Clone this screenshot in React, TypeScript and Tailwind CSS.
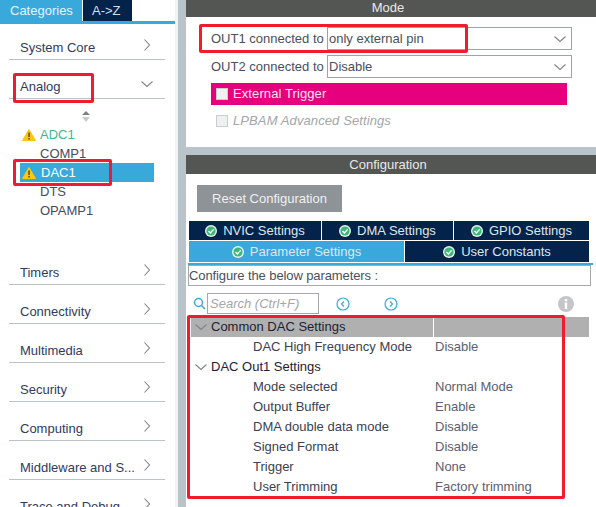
import React from 'react'

const font = 'font-["Liberation_Sans",Arial,sans-serif]'

function Chevron({ down = false }: { down?: boolean }) {
  return (
    <svg width="12" height="12" viewBox="0 0 12 12" fill="none" stroke="#7f8488" strokeWidth="1.1">
      {down ? <path d="M0.5 3.5 L6 8.5 L11.5 3.5" /> : <path d="M3.5 0.5 L8.5 6 L3.5 11.5" />}
    </svg>
  )
}

function Warn() {
  return (
    <svg width="14" height="12" viewBox="0 0 14 12">
      <path d="M7 0.5 L13.5 11.5 L0.5 11.5 Z" fill="#fbc80a" stroke="#fbc80a" strokeLinejoin="round" />
      <rect x="6.3" y="3.5" width="1.5" height="4.5" fill="#5a4a10" />
      <rect x="6.3" y="9" width="1.5" height="1.5" fill="#5a4a10" />
    </svg>
  )
}

function Check() {
  return (
    <svg width="12" height="12" viewBox="0 0 12 12" className="shrink-0">
      <circle cx="6" cy="6" r="6" fill="#e8f3ee" />
      <circle cx="6" cy="6" r="4.6" fill="#3cb878" />
      <path d="M3.5 6 L5.4 7.9 L8.6 4.4" fill="none" stroke="#fff" strokeWidth="1.4" />
    </svg>
  )
}

function Category({ label, h = 'h-[39px]', down = false }: { label: string; h?: string; down?: boolean }) {
  return (
    <div className={`${h} ml-[9px] w-[156px] border-b border-[#b9c4ca] flex items-end justify-between pl-[11px] pr-[12px] pb-[3px] shrink-0`}>
      <span className="text-[13px] leading-[16px] text-[#2f3a63] whitespace-nowrap">{label}</span>
      <span className="mb-[5px]"><Chevron down={down} /></span>
    </div>
  )
}

function Sidebar() {
  return (
    <div className="w-[175px] shrink-0 bg-white flex flex-col overflow-hidden h-[507px]">
      <div className="flex h-[21px] shrink-0">
        <div className="w-[82px] bg-[#39a9dc] text-[#e6f3fa] text-[13px] pl-[10px] leading-[21px]">Categories</div>
        <div className="w-[49px] ml-px bg-[#03234b] text-[#d5dde6] text-[13px] pl-[9px] leading-[21px]">A-&gt;Z</div>
      </div>
      <div className="h-[3px] w-[177px] bg-[#39a9dc] shrink-0" />
      <Category label="System Core" h="h-[36px]" />
      <Category label="Analog" down />

      <div className="h-[147px] shrink-0 flex flex-col pt-[7px]">
        <div className="h-[19px] flex items-center justify-center pr-[3px] pt-[2px]">
          <svg width="8" height="11" viewBox="0 0 8 11">
            <path d="M4 0 L8 4 L0 4 Z" fill="#7d8286" />
            <path d="M4 11 L8 6 L0 6 Z" fill="#c9cccf" />
          </svg>
        </div>
        <div className="h-[19px] flex items-center pl-[22px] gap-[4px] text-[13px] text-[#3fb58d]"><Warn /><span>ADC1</span></div>
        <div className="h-[19px] flex items-center pl-[40px] text-[13px] text-[#454a63]">COMP1</div>
        <div className="h-[19px] ml-[20px] w-[134px] bg-[#39a9dc] flex items-center pl-[2px] gap-[5px] text-[13px] text-white"><Warn /><span>DAC1</span></div>
        <div className="h-[19px] flex items-center pl-[40px] text-[13px] text-[#454a63]">DTS</div>
        <div className="h-[19px] flex items-center pl-[40px] text-[13px] text-[#454a63]">OPAMP1</div>
      </div>

      <Category label="Timers" />
      <Category label="Connectivity" />
      <Category label="Multimedia" />
      <Category label="Security" />
      <Category label="Computing" />
      <Category label="Middleware and S..." />
      <Category label="Trace and Debug" />
    </div>
  )
}

function SelectRow({ label, value }: { label: string; value: string }) {
  return (
    <div className="flex items-center h-[23px] pl-[25px]">
      <span className="w-[116px] text-[13px] text-[#4a4f5c] whitespace-nowrap">{label}</span>
      <div className="w-[245px] h-[23px] border border-[#9ea3a6] flex items-center justify-between pl-[1px] pr-[5px] text-[13px] text-[#4a4f5c]">
        <span>{value}</span>
        <Chevron down />
      </div>
    </div>
  )
}

function SettingsTab({ label, className }: { label: string; className: string }) {
  return (
    <div className={`flex items-center justify-center gap-[6px] text-[13px] text-[#dfe6ee] ${className}`}>
      <Check />
      <span>{label}</span>
    </div>
  )
}

function ParamRow({ label, value }: { label: string; value: string }) {
  return (
    <div className="h-[20px] flex items-center text-[13px]">
      <span className="w-[244px] pl-[62px] shrink-0 text-[#3c4152] whitespace-nowrap">{label}</span>
      <span className="whitespace-nowrap text-[#5b6070]">{value}</span>
    </div>
  )
}

function GroupRow({ label, shaded = false }: { label: string; shaded?: boolean }) {
  return (
    <div className={`h-[20px] flex items-center text-[13px] text-[#1d2233] ${shaded ? 'bg-[#b0b0b0]' : ''}`}>
      <span className="w-[242px] flex items-center pl-[4px] gap-[4px] h-full shrink-0 whitespace-nowrap">
        <Chevron down />
        {label}
      </span>
      {shaded && <span className="w-px h-full bg-white" />}
    </div>
  )
}

function MainPanel() {
  return (
    <div className="flex-1 flex flex-col min-w-0 h-[507px] overflow-hidden">
      <div className="h-[17px] bg-[#545654] text-[#e8e8e8] text-[13px] leading-[15px] text-center pr-[6px] shrink-0">Mode</div>
      <div className="h-[130px] bg-white pt-[10px] flex flex-col gap-[5px] shrink-0">
        <SelectRow label="OUT1 connected to" value="only external pin" />
        <SelectRow label="OUT2 connected to" value="Disable" />
        <div className="ml-[25px] w-[356px] h-[22px] bg-[#e6007e] flex items-center pl-[5px] gap-[5px] text-[13px] tracking-[0.1px] text-[#f6e6ef]">
          <span className="w-[12px] h-[12px] bg-[#eef0f2] border border-[#c9cdd0]" />
          External Trigger
        </div>
        <div className="ml-[25px] h-[22px] flex items-center pl-[5px] gap-[5px] text-[13px] italic tracking-[0.1px] text-[#a3a6aa]">
          <span className="w-[12px] h-[12px] bg-[#eef0f2] border border-[#c9cdd0]" />
          LPBAM Advanced Settings
        </div>
      </div>
      <div className="h-[8px] shrink-0" />
      <div className="h-[19px] bg-[#545654] text-[#e8e8e8] text-[13px] leading-[19px] text-center pr-[6px] shrink-0">Configuration</div>
      <div className="flex-1 bg-white pt-[11px]">
        <div className="ml-[11px] w-[145px] h-[27px] bg-[#8e9398] text-[#eef0f1] text-[13px] flex items-center justify-center">
          Reset Configuration
        </div>
        <div className="ml-[3px] mt-[9px] w-[400px] flex gap-px h-[19px]">
          <SettingsTab label="NVIC Settings" className="w-[132px] bg-[#03234b]" />
          <SettingsTab label="DMA Settings" className="w-[131px] bg-[#03234b]" />
          <SettingsTab label="GPIO Settings" className="w-[135px] bg-[#03234b]" />
        </div>
        <div className="ml-[3px] mt-px w-[400px] flex gap-px h-[21px]">
          <SettingsTab label="Parameter Settings" className="w-[215px] bg-[#39a9dc]" />
          <SettingsTab label="User Constants" className="flex-1 bg-[#03234b]" />
        </div>
        <div className="ml-[2px] w-[405px] h-[2px] mt-px bg-[#39a9dc]" />
        <div className="ml-[2px] w-[403px] h-[21px] border border-[#a5a9ac] text-[13px] tracking-[-0.1px] text-[#4a4f5c] flex items-center">
          Configure the below parameters :
        </div>
        <div className="h-[27px] mt-[4px] flex items-center pl-[7px]">
          <svg width="13" height="13" viewBox="0 0 13 13" fill="none" stroke="#39a9dc" strokeWidth="1.5">
            <circle cx="5.5" cy="5.5" r="4" />
            <path d="M8.5 8.5 L12 12" />
          </svg>
          <div className="ml-px w-[112px] h-[21px] border border-[#a5a9ac] text-[13px] italic text-[#a3a6aa] pl-[2px] leading-[19px]">Search (Ctrl+F)</div>
          <svg className="ml-[17px]" width="14" height="14" viewBox="0 0 14 14" fill="none" stroke="#39a9dc" strokeWidth="1.2">
            <circle cx="7" cy="7" r="6" />
            <path d="M8 4.5 L5.5 7 L8 9.5" />
          </svg>
          <svg className="ml-[34px]" width="14" height="14" viewBox="0 0 14 14" fill="none" stroke="#39a9dc" strokeWidth="1.2">
            <circle cx="7" cy="7" r="6" />
            <path d="M6 4.5 L8.5 7 L6 9.5" />
          </svg>
          <svg className="ml-[160px]" width="16" height="16" viewBox="0 0 16 16">
            <circle cx="8" cy="8" r="8" fill="#c4c6c8" />
            <rect x="6.8" y="6.6" width="2.4" height="6.4" fill="#fff" />
            <rect x="6.8" y="3" width="2.4" height="2.4" fill="#fff" />
          </svg>
        </div>
        <div className="ml-[5px] w-[398px]">
          <GroupRow label="Common DAC Settings" shaded />
          <ParamRow label="DAC High Frequency Mode" value="Disable" />
          <GroupRow label="DAC Out1 Settings" />
          <ParamRow label="Mode selected" value="Normal Mode" />
          <ParamRow label="Output Buffer" value="Enable" />
          <ParamRow label="DMA double data mode" value="Disable" />
          <ParamRow label="Signed Format" value="Disable" />
          <ParamRow label="Trigger" value="None" />
          <ParamRow label="User Trimming" value="Factory trimming" />
        </div>
      </div>
    </div>
  )
}

export default function App() {
  return (
    <div className={`relative w-[596px] h-[507px] overflow-hidden flex bg-[#b9c4ca] ${font}`}>
      <Sidebar />
      <div className="w-[3px] h-full bg-[#f1f3f4] shrink-0" />
      <div className="w-[8px] shrink-0" />
      <MainPanel />

      {/* red annotation boxes drawn over the screenshot */}
      <div className="absolute left-[13px] top-[73px] w-[81px] h-[30px] border-[3px] border-[#ee1c2e] rounded-[2px]" />
      <div className="absolute left-[13px] top-[159px] w-[99px] h-[27px] border-[3px] border-[#ee1c2e] rounded-[2px]" />
      <div className="absolute left-[199px] top-[24px] w-[269px] h-[29px] border-[3px] border-[#ee1c2e] rounded-[2px]" />
      <div className="absolute left-[187px] top-[315px] w-[378px] h-[184px] border-[3px] border-[#ee1c2e] rounded-[2px]" />
    </div>
  )
}
